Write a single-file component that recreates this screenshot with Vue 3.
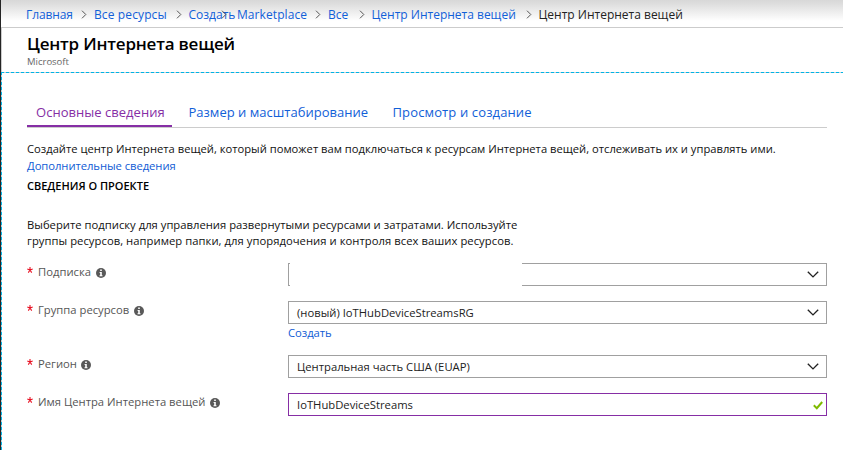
<script setup>
const crumbs = [
  { text: 'Главная', cls: 'c-home' },
  { text: 'Все ресурсы', cls: 'c-resources' },
  { text: 'Создать', cls: 'c-create', overlap: true },
  { text: 'Marketplace', cls: 'c-market' },
  { text: 'Все', cls: 'c-all' },
  { text: 'Центр Интернета вещей', cls: 'c-hub' },
  { text: 'Центр Интернета вещей', cls: 'c-current' },
]
const tabs = [
  { text: 'Основные сведения', cls: 't-basics' },
  { text: 'Размер и масштабирование', cls: 't-size' },
  { text: 'Просмотр и создание', cls: 't-review' },
]
const fields = [
  { label: 'Подписка', value: '', kind: 'redacted' },
  { label: 'Группа ресурсов', value: '(новый) IoTHubDeviceStreamsRG', link: 'Создать', kind: 'select' },
  { label: 'Регион', value: 'Центральная часть США (EUAP)', kind: 'select' },
  { label: 'Имя Центра Интернета вещей', value: 'IoTHubDeviceStreams', kind: 'input' },
]
</script>

<template>
  <div class="page">
    <nav class="crumbs">
      <span v-for="(c, i) in crumbs" :key="i" class="crumb" :class="c.cls">
        <a class="crumb-text">{{ c.text }}</a>
        <svg v-if="i < crumbs.length - 1" class="sep" :class="{ over: c.overlap }" width="6" height="9" viewBox="0 0 6 9">
          <path d="M1 .7 4.8 4.5 1 8.3" fill="none" stroke="#555" stroke-width="1" />
        </svg>
      </span>
    </nav>

    <header class="head">
      <h1>Центр Интернета вещей</h1>
      <p>Microsoft</p>
    </header>

    <main class="body">
      <div class="tabs">
        <a v-for="(t, i) in tabs" :key="i" class="tab" :class="[t.cls, { active: i === 0 }]">{{ t.text }}</a>
      </div>
      <p class="intro">Создайте центр Интернета вещей, который поможет вам подключаться к ресурсам Интернета вещей, отслеживать их и управлять ими.</p>
      <a class="link more">Дополнительные сведения</a>
      <h2>СВЕДЕНИЯ О ПРОЕКТЕ</h2>
      <p class="help"><span class="help-first">Выберите подписку для управления развернутыми ресурсами и затратами. Используйте</span><br />группы ресурсов, например папки, для упорядочения и контроля всех ваших ресурсов.</p>

      <div class="form">
        <div v-for="f in fields" :key="f.label" class="row" :class="{ tall: f.link }">
          <div class="label">
            <svg class="star" width="6" height="6" viewBox="0 0 6 6">
              <path d="M3 3V0M3 3 .3 2.1M3 3 5.7 2.1M3 3 1.3 5.6M3 3 4.7 5.6" stroke="#e81123" stroke-width="1.1" fill="none" />
            </svg>
            <span>{{ f.label }}</span>
            <svg class="info" width="10" height="10" viewBox="0 0 10 10">
              <circle cx="5" cy="5" r="5" fill="#595959" />
              <path d="M4.2 1.6h1.6v1.5H4.2zM3.6 4h2.2v3.3h.7v.9h-3v-.9h.7V4.9h-.6z" fill="#fff" />
            </svg>
          </div>
          <div class="control">
            <div class="box" :class="f.kind">
              <span class="value">{{ f.value }}</span>
              <svg v-if="f.kind !== 'input'" class="chev" width="12" height="7" viewBox="0 0 12 7">
                <path d="M.8.7 6 5.9 11.2.7" fill="none" stroke="#222" stroke-width="1.35" />
              </svg>
              <svg v-else class="check" width="10" height="9" viewBox="0 0 10 9">
                <path d="M.8 4.3 3.8 7.2 9.2 1" fill="none" stroke="#7fba00" stroke-width="2" />
              </svg>
            </div>
            <a v-if="f.link" class="link">{{ f.link }}</a>
          </div>
        </div>
      </div>
    </main>
  </div>
</template>

<style>
body { background: #fff; }
</style>

<style scoped>
.page {
  box-sizing: border-box;
  width: 843px;
  height: 450px;
  overflow: hidden;
  border-left: 1px solid #252525;
  background: #fff;
  color: #111;
  font: 11.25px/16px "Open Sans", "Noto Sans", sans-serif;
}
h1, h2, p { margin: 0; font-weight: 400; }
.crumbs {
  display: flex;
  box-sizing: border-box;
  height: 27px;
  padding: 6px 0 0 25px;
  background: linear-gradient(#d8d8d8 0, #dcdcdc 3px, #fff 21px);
  font-size: 12px;
  line-height: 18px;
  white-space: nowrap;
}
.crumb { display: flex; flex: none; justify-content: space-between; }
.crumb-text { color: #1160d8; }
.sep { flex: none; margin: 4px 7px 0 0; }
.sep.over { margin: 4px 0 0 -14px; }
.c-home { width: 68px; letter-spacing: -.1px; }
.c-resources { width: 94.5px; letter-spacing: .12px; }
.c-create { width: 48.5px; justify-content: flex-start; }
.c-market { width: 91px; letter-spacing: .08px; }
.c-all { width: 43.5px; }
.c-hub { width: 167px; }
.c-current .crumb-text { color: #222; }
.head {
  box-sizing: border-box;
  height: 45px;
  padding: 5px 0 0 26px;
  border-top: 1px solid #ccc;
  border-left: 1px solid #ccc;
}
h1 { margin-left: -1px; color: #000; font-size: 17px; line-height: 22px; font-weight: 600; letter-spacing: -.2px; }
.head p { margin: 1px 0 0 -1px; color: #666; font-size: 9.5px; line-height: 12px; }
.body {
  box-sizing: border-box;
  height: 378px;
  padding: 30px 16px 0 26px;
  background:
    repeating-linear-gradient(90deg, #00b4e6 0 3px, #c4d0d4 3px 5px) 0 0 / 100% 1px no-repeat,
    repeating-linear-gradient(#00b4e6 0 3px, #c4d0d4 3px 5px) 0 0 / 1px 100% no-repeat;
}
.tabs {
  display: flex;
  height: 25px;
  border-bottom: 1px solid #ccc;
  font-size: 13px;
  line-height: 20px;
  white-space: nowrap;
}
.tab { box-sizing: border-box; height: 25px; color: #1160d8; }
.tab.active { border-bottom: 2px solid #862ea5; color: #862ea5; }
.t-basics { width: 145px; padding-left: 9px; margin-right: 16.5px; letter-spacing: .03px; }
.t-size { width: 204px; letter-spacing: .01px; }
.t-review { letter-spacing: .13px; }
.intro { margin-top: 13px; font-size: 11.2px; letter-spacing: .008px; white-space: nowrap; }
.link { display: block; color: #0f5bd5; }
.more { margin-top: 1px; letter-spacing: -.06px; }
h2 { margin-top: 4px; color: #000; font-size: 11px; font-weight: 600; }
.help { margin-top: 23px; white-space: nowrap; letter-spacing: .04px; }
.help-first { letter-spacing: .005px; }
.form { margin-top: 14px; }
.row { display: flex; height: 38px; }
.row.tall { height: 54px; }
.label { display: flex; width: 261px; padding-top: 1px; box-sizing: border-box; flex: none; color: #555; white-space: nowrap; }
.star { flex: none; margin: 3px 5px 0 0; }
.info { flex: none; margin: 4px 0 0 4.5px; }
.control { flex: 1; }
.box {
  display: flex;
  align-items: center;
  box-sizing: border-box;
  height: 23px;
  padding: 0 7px 0 8px;
  border: 1px solid #a0a0a0;
  color: #222;
}
.value { flex: 1; }
.redacted .value { align-self: stretch; flex: none; width: 232px; margin: -1px auto -1px -7px; background: #fff; }
.input { padding-right: 3px; border-color: #862ea5; }
.check { margin-top: 1px; }
.control .link { margin-top: 1px; letter-spacing: -.05px; }
</style>
